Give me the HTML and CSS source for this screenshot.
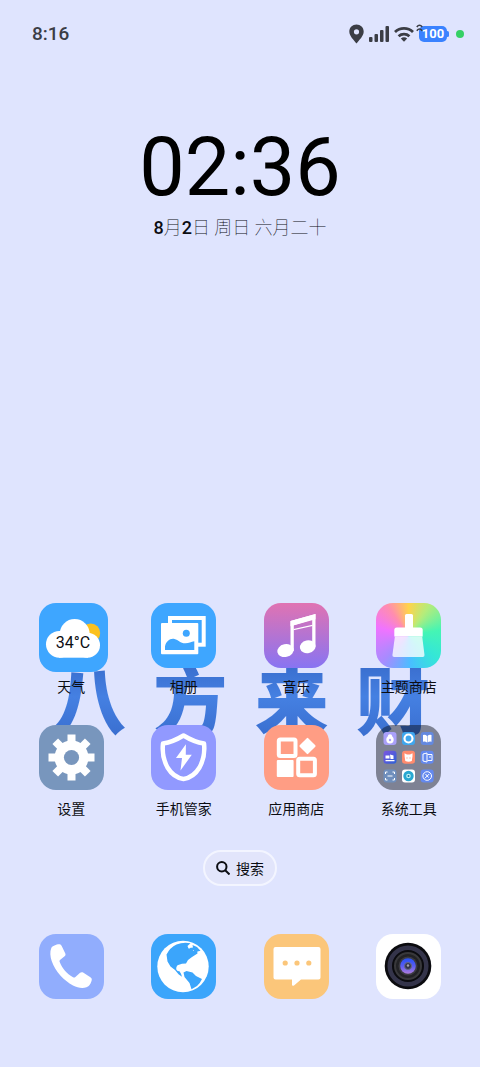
FILE: index.html
```
<!DOCTYPE html>
<html lang="zh-CN">
<head>
    <meta charset="UTF-8">
    <meta name="viewport" content="width=device-width, initial-scale=1.0">
    <title>桌面</title>
    <link rel="stylesheet" href="styles.css">
</head>
<body>

<div class="screen">
    <!-- Status bar -->
    <header class="status-bar">
        <span class="status-time">8:16</span>
        <div class="status-icons">
            <svg width="15" height="20" viewBox="0 0 15 20"><path fill="#3b3d45" fill-rule="evenodd" d="M7.500 .5C3.500 .5 .3 3.600.3 7.600c0 4.600 4.500 8.400 7.200 12 2.700-3.600 7.200-7.400 7.200-12C14.700 3.600 11.500.5 7.500.5zm0 4.700a2.600 2.600 0 1 1 0 5.200 2.600 2.600 0 0 1 0-5.200z"/></svg>
            <svg width="20" height="16" viewBox="0 0 20 16" fill="#3b3d45"><rect x="0" y="11" width="3.500" height="5" rx="1"/><rect x="5.500" y="8" width="3.500" height="8" rx="1"/><rect x="11" y="4" width="3.500" height="12" rx="1"/><rect x="16.500" y="0" width="3.500" height="16" rx="1"/></svg>
            <svg width="20" height="16" viewBox="0 0 20 16" fill="none" stroke="#3b3d45" stroke-width="2.800"><path d="M1 6a13 13 0 0 1 18 0"/><path d="M4.600 10.200a8 8 0 0 1 10.800 0"/><path fill="#3b3d45" stroke="none" d="M6.800 12.600a5 5 0 0 1 6.400 0L10 15.800z"/></svg>
            <span class="battery">100
                <svg class="charge-mark" width="7" height="8" viewBox="0 0 7 8" fill="none" stroke="#3b3d45" stroke-width="1.600"><path d="M.8 3Q3.500-.6 6.200 3M.8 6.800Q3.500 3.200 6.200 6.800"/></svg>
            </span>
            <span class="active-dot"></span>
        </div>
    </header>

    <!-- Clock -->
    <section class="clock">
        <time class="clock-time" datetime="02:36">02:36</time>
        <p class="clock-date"><b>8</b>月<b>2</b>日 周日 六月二十</p>
    </section>

    <!-- Apps -->
    <main class="apps">
        <div class="wallpaper-text"><span>八</span><span>方</span><span>来</span><span>财</span></div>

        <a class="app" href="#">
            <svg class="icon icon-weather" viewBox="0 0 69 69">
                <circle cx="51.700" cy="30" r="9.500" fill="#fbc11f"/>
                <g fill="#fff"><circle cx="35.700" cy="31" r="15"/><circle cx="20.400" cy="41.300" r="13.400"/><circle cx="48.500" cy="42.200" r="12.500"/><rect x="20" y="36" width="29" height="18.700"/></g>
                <text class="weather-temp" x="34" y="45" text-anchor="middle">34°C</text>
            </svg>
            <span>天气</span>
        </a>
        <a class="app" href="#">
            <svg class="icon icon-album" viewBox="0 0 65 65">
                <rect x="19" y="15" width="33.700" height="26.700" fill="none" stroke="#fff" stroke-width="4"/>
                <rect x="10" y="20" width="37.300" height="31.300" rx="1" fill="#fff"/>
                <circle cx="35.300" cy="30.300" r="3.500" fill="#3ea6ff"/>
                <path fill="#3ea6ff" d="M14 47v-3.500c1-5 5-8.500 9.500-7.500 4 1 6 4.500 11 4.300 3.500 0 5.500-1.300 8.800-2V47z"/>
            </svg>
            <span>相册</span>
        </a>
        <a class="app" href="#">
            <svg class="icon icon-music" viewBox="0 0 65 65" fill="#fff">
                <path d="M26.500 18 51.500 11V44h-3.300V16.500l-18.400 5.800V48h-3.300z"/>
                <path d="M26.500 18 51.500 11v5.200l-25 7zM29.500 26l19-4.200v1.200l-19 4.200z"/>
                <ellipse cx="21.500" cy="47.600" rx="8.300" ry="6.400" transform="rotate(-12 21.500 47.600)"/>
                <ellipse cx="43.700" cy="43.700" rx="7.900" ry="6.400" transform="rotate(-12 43.700 43.700)"/>
            </svg>
            <span>音乐</span>
        </a>
        <a class="app" href="#">
            <svg class="icon icon-theme" viewBox="0 0 65 65" fill="#fff">
                <rect x="29" y="11" width="8" height="16" rx="1.500"/>
                <path d="M18.300 33.500V27q0-2.500 2.500-2.500h23.400q2.500 0 2.500 2.500v6.500z"/>
                <path fill-opacity=".78" d="M18.900 33.500h27.300l2.300 18.500q.2 2-1.800 2H18.200q-2 0-1.800-2z"/>
            </svg>
            <span>主题商店</span>
        </a>

        <a class="app" href="#">
            <svg class="icon icon-settings" viewBox="0 0 65 65">
                <g fill="#fff">
                    <circle cx="32.500" cy="32.500" r="17"/>
                    <rect x="28.500" y="9.500" width="8" height="46"/>
                    <rect x="28.500" y="9.500" width="8" height="46" transform="rotate(45 32.500 32.500)"/>
                    <rect x="28.500" y="9.500" width="8" height="46" transform="rotate(90 32.500 32.500)"/>
                    <rect x="28.500" y="9.500" width="8" height="46" transform="rotate(135 32.500 32.500)"/>
                </g>
                <circle cx="32.500" cy="32.500" r="7.600" fill="#7896bd"/>
            </svg>
            <span>设置</span>
        </a>
        <a class="app" href="#">
            <svg class="icon icon-guard" viewBox="0 0 65 65">
                <path fill="none" stroke="#fff" stroke-width="4.500" stroke-linejoin="round" d="M32.500 10.500Q22 17 12 18.500q-1.500 13 4.500 24 6 10 16 11.500 10-1.500 16-11.500 6-11 4.500-24Q43 17 32.500 10.500z"/>
                <path fill="#fff" d="M34.900 19.300 25 33h6l-1.500 12.500L40.800 29.800h-6z"/>
            </svg>
            <span>手机管家</span>
        </a>
        <a class="app" href="#">
            <svg class="icon icon-store" viewBox="0 0 65 65">
                <g fill="none" stroke="#fff" stroke-width="4"><rect x="14.800" y="14.500" width="16.700" height="16.500" rx="1.500"/><rect x="34.200" y="33.700" width="16.700" height="16.500" rx="1.500"/></g>
                <rect x="12.800" y="35" width="16.800" height="17" rx="1" fill="#fff"/>
                <rect x="37.500" y="15" width="12" height="12" rx="1" fill="#fff" transform="rotate(45 43.500 21)"/>
            </svg>
            <span>应用商店</span>
        </a>
        <a class="app" href="#">
            <svg class="icon icon-folder" viewBox="0 0 65 65">
                <defs>
                    <linearGradient id="mini" x2="1" y2="1"><stop stop-color="#7d55e0"/><stop offset="1" stop-color="#2b62d6"/></linearGradient>
                </defs>
                <rect x="7.500" y="7" width="13" height="13" rx="3" fill="#a9a0fa"/>
                <rect x="26" y="7" width="13" height="13" rx="3" fill="#3fa6ee"/>
                <rect x="44.700" y="7" width="13" height="13" rx="3" fill="#6489df"/>
                <rect x="7.500" y="25.700" width="13" height="13" rx="3" fill="url(#mini)"/>
                <rect x="26" y="25.700" width="13" height="13" rx="3" fill="#ff8b6e"/>
                <rect x="44.700" y="25.700" width="13" height="13" rx="3" fill="#6489ef"/>
                <rect x="7.500" y="44.500" width="13" height="13" rx="3" fill="#6f8fbd"/>
                <rect x="26" y="44.500" width="13" height="13" rx="3" fill="#fff"/>
                <rect x="44.700" y="44.500" width="13" height="13" rx="3" fill="#6489ef"/>
                <g fill="#fff">
                    <circle cx="14" cy="11.500" r="2.200"/><circle cx="14" cy="14.800" r="3.700"/>
                    <path d="M47 10q2.500-.8 4 1v6.500q-2-1.500-4-.8zM55.500 10q-2.500-.8-4 1v6.500q2-1.500 4-.8z"/>
                    <path d="M9.500 30.500h4v3h-4zM14 29.500l3.500 1v3.500h-3zM9.500 35h9v1.200h-9z"/>
                    <path d="M28.500 28.200l2.500 1.300h3l2.500-1.300v3l-.7 4.800q-3.200 1.500-6.500 0l-.7-4.800z"/>
                </g>
                <circle cx="14" cy="15" r="1.200" fill="#a9a0fa"/>
                <path stroke="#ff8b6e" d="M31 32.500v1M34 32.500v1"/>
                <g fill="none" stroke="#fff">
                    <circle cx="32.500" cy="13.500" r="4" stroke-width="2.200"/>
                    <path d="M47 29l4-1v9l-4-1zM51.500 29.500H56v6h-4.500M53 32h2"/>
                    <path d="M9.500 49v-2h2M16.500 47h2v2M9.500 53v2h2M16.500 55h2v-2M11.500 51h5"/>
                    <circle cx="51.200" cy="51" r="4.300"/><path d="M49 53.200l4.300-4.300M49.500 49l3 3.500"/>
                </g>
                <circle cx="32.500" cy="51" r="5.200" fill="#29a8d2"/><circle cx="32.500" cy="51" r="2.300" fill="#b8f1f5"/><circle cx="32.500" cy="51" r="1" fill="#13799f"/>
            </svg>
            <span>系统工具</span>
        </a>
    </main>

    <button class="search" type="button">
        <svg width="14" height="14" viewBox="0 0 14 14" fill="none" stroke="#0c0d12" stroke-width="2"><circle cx="5.800" cy="5.800" r="4.700"/><path d="M9.200 9.200l4.300 4.300"/></svg>
        搜索
    </button>

    <!-- Dock -->
    <nav class="dock">
        <a class="app" href="#" aria-label="电话">
            <svg class="icon icon-phone" viewBox="0 0 65 65">
                <path fill="#fff" d="M12.300 14c1-2.300 6-4.200 8.400-3.800 1.200.2 1.600 1 2 1.800l3.600 7.500c.5 1.200.2 2-.7 2.800l-4.300 3.500c-.8.700-1 1.300-.6 2.300C23.500 35 27.500 39.500 34 43.300c1 .5 1.600.4 2.400-.3l4.700-4.200c1-.8 2-.9 3-.2l7.300 4.700c1.200.8 1.600 1.800 1.300 3-.5 2.500-2.500 6.300-5.200 7-4 1.200-9 .6-13.500-1.800C25 46.500 16.500 38 12.700 27c-1.500-4.500-2-9-.4-13z"/>
            </svg>
        </a>
        <a class="app" href="#" aria-label="浏览器">
            <svg class="icon icon-browser" viewBox="0 0 65 65">
                <circle cx="32" cy="32.500" r="25.700" fill="#fff"/>
                <g fill="#3ba5fb">
                    <path d="M15.500 20.500Q19 13.500 25.500 10.500q6.500-2.500 14-1.200L36.500 12l1 2.500 3.500.5 1.500 2 3.500-1 .5 3.500-5.500 3.500-4 3-2 3.500-4 .2-4.500 1.500q-1.800 2-1.300 4 .8 2.300 3.300 2l1.500 2.500 1 3-3.500-2.500L24 36l-4.500-3.500-3-5z"/>
                    <path d="M41.500 11l4.500 2 3.500 3.800-3 .7-2.500 2-1.500-3.500-3 .5-1-2.500 3.500-.5zM32.500 38.500l3-1.500 6 1.500 3.500 3.500 6 3q-2 4.500-5 7l-5.500 3.300-2-6.300-5-6z"/>
                </g>
            </svg>
        </a>
        <a class="app" href="#" aria-label="短信">
            <svg class="icon icon-message" viewBox="0 0 65 65">
                <path fill="#fff" d="M11.500 13h43q2 0 2 2v28.500q0 2-2 2H37l-7 6q-2 1-2-1v-5H11.500q-2 0-2-2V15q0-2 2-2z"/>
                <g fill="#fbc67a"><circle cx="21.200" cy="29" r="2.600"/><circle cx="33" cy="29" r="2.600"/><circle cx="44.800" cy="29" r="2.600"/></g>
            </svg>
        </a>
        <a class="app" href="#" aria-label="相机">
            <svg class="icon icon-camera" viewBox="0 0 65 65">
                <defs>
                    <linearGradient id="lens" x2="0" y2="1"><stop stop-color="#2450f5"/><stop offset=".5" stop-color="#5a5cf2"/><stop offset="1" stop-color="#b07ddd"/></linearGradient>
                </defs>
                <circle cx="32" cy="32" r="23.300" fill="#0b0b0f"/>
                <circle cx="32" cy="32" r="18.300" fill="none" stroke="#34344a" stroke-width="4.500"/>
                <circle cx="32" cy="32" r="13" fill="#222225" stroke="#38383b" stroke-width="2"/>
                <circle cx="32" cy="32" r="9.500" fill="#3c3b42"/>
                <circle cx="32" cy="32" r="7.800" fill="url(#lens)"/>
                <circle cx="32" cy="32" r="3.500" fill="#34354d" stroke="#676b88"/>
                <circle cx="32" cy="31.500" r="1.200" fill="#a5a4b5"/>
            </svg>
        </a>
    </nav>
</div>

</body>
</html>
```
FILE: styles.css
```
* {
    box-sizing: border-box;
}
body {
    margin: 0;
    background-color: #dfe4fe;
    color: #0c0d12;
    font-family: Roboto, "Noto Sans CJK SC", sans-serif;
    font-size: 14px;
}
.screen {
    display: flex;
    flex-direction: column;
    min-height: 100vh;
    padding-bottom: 68px;
}

/* Status bar */
.status-bar {
    display: flex;
    justify-content: space-between;
    align-items: center;
    padding: 22px 16px 0 32px;
    color: #3b3d45;
}
.status-time {
    font-size: 19px;
    line-height: 24px;
    font-weight: 500;
}
.status-icons {
    display: flex;
    align-items: center;
    gap: 5px;
}
.battery {
    position: relative;
    width: 28px;
    height: 16px;
    margin-right: 4px;
    border-radius: 5px;
    background-color: #3a82ff;
    color: #fff;
    font-size: 13px;
    line-height: 16px;
    font-weight: 700;
    text-align: center;
}
.battery::after {
    content: "";
    position: absolute;
    right: -2px;
    top: 5px;
    width: 3px;
    height: 6px;
    border-radius: 2px;
    background-color: #3a82ff;
}
.charge-mark {
    position: absolute;
    left: -3px;
    top: -2px;
}
.active-dot {
    width: 8px;
    height: 8px;
    border-radius: 50%;
    background-color: #35d065;
}

/* Clock */
.clock {
    padding-top: 74px;
    text-align: center;
}
.clock-time {
    display: block;
    color: #000;
    font-size: 81px;
    line-height: 96px;
}
.clock-date {
    margin: 0;
    font-size: 18px;
    line-height: 24px;
    font-weight: 100;
}
.clock-date b {
    font-weight: 500;
}

/* Apps */
.apps {
    position: relative;
    z-index: 0;
    display: grid;
    grid-template-columns: repeat(4, 1fr);
    row-gap: 28px;
    margin-top: auto;
    padding: 0 15px;
}
.wallpaper-text {
    position: absolute;
    z-index: -1;
    top: 46px;
    left: 0;
    right: 0;
    display: flex;
    justify-content: space-between;
    padding: 0 50px 0 52px;
    font-family: "Noto Sans CJK SC", sans-serif;
    font-size: 74px;
    line-height: 96px;
    font-weight: 900;
}
.wallpaper-text span {
    background-image: linear-gradient(#3b70d0 20%, #4580e2 50%, #3a6fd0 90%);
    background-clip: text;
    -webkit-background-clip: text;
    color: transparent;
}
.app {
    display: flex;
    flex-direction: column;
    align-items: center;
    gap: 9px;
    color: #0c0d12;
    line-height: 20px;
    text-decoration: none;
}
.icon {
    display: block;
    width: 65px;
    height: 65px;
    border-radius: 17px;
}
.icon-weather {
    width: 69px;
    height: 69px;
    margin: 0 -4px -4px 0;
    background-color: #3ea6ff;
}
.weather-temp {
    fill: #0c0d12;
    font-size: 16px;
}
.icon-album {
    background-color: #3ea6ff;
}
.icon-music {
    background-image: linear-gradient(#e073b2, #8874f2);
}
.icon-theme {
    background-image: conic-gradient(#ffd34c, #b5ec7b 35deg, #45f5b4 80deg, #34e6d8 130deg, #48bfff 175deg, #a88bff 225deg, #f073ff 285deg, #ff8dae 325deg, #ffd34c);
}
.icon-settings {
    background-color: #7896bd;
}
.icon-guard {
    background-color: #9199ff;
}
.icon-store {
    background-color: #ff9d84;
}
.icon-folder {
    background-color: rgba(10, 15, 25, 0.46);
}

/* Search */
.search {
    display: flex;
    align-items: center;
    justify-content: center;
    gap: 6px;
    align-self: center;
    height: 36px;
    margin: 31px 0 48px;
    padding: 0 11px;
    border: 2px solid #f3f5ff;
    border-radius: 18px;
    background-color: #e2e5fb;
    color: #0c0d12;
    font-family: inherit;
    font-size: 14px;
}

/* Dock */
.dock {
    display: grid;
    grid-template-columns: repeat(4, 1fr);
    padding: 0 15px;
}
.icon-phone {
    background-color: #91adfd;
}
.icon-browser {
    background-color: #3ba5fb;
}
.icon-message {
    background-color: #fbc67a;
}
.icon-camera {
    background-color: #fff;
}
```
